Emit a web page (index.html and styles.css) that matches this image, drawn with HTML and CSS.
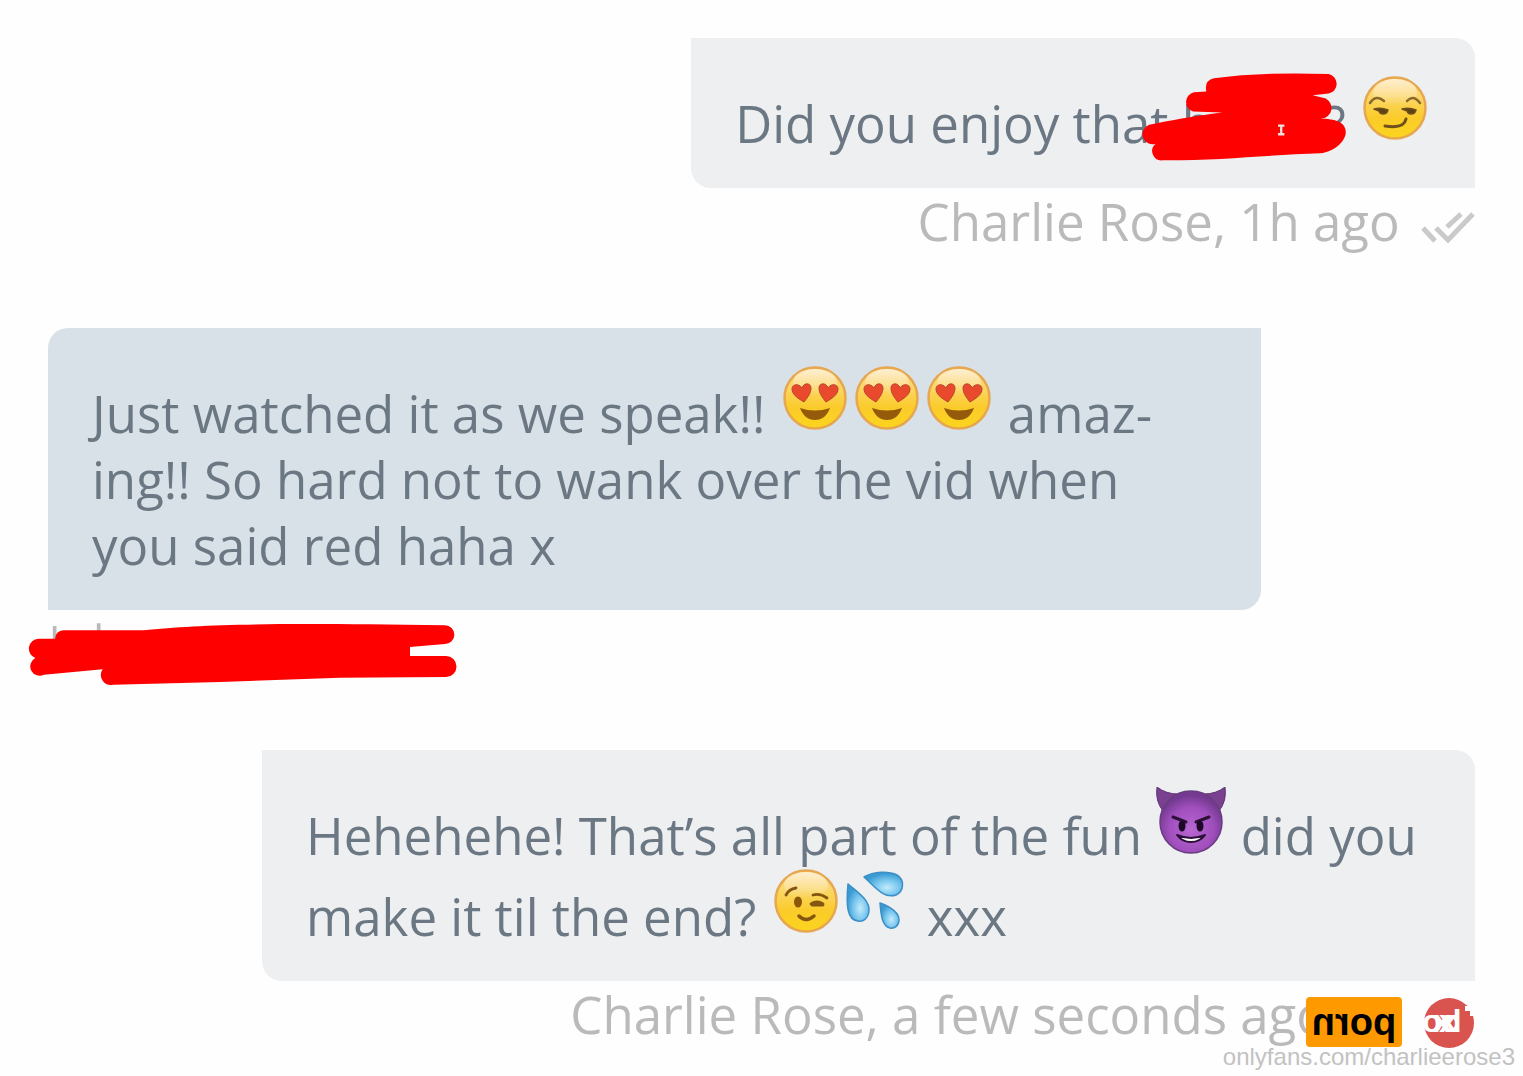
FILE: index.html
```
<!DOCTYPE html>
<html lang="en">
<head>
    <meta charset="UTF-8">
    <meta name="viewport" content="width=device-width, initial-scale=1.0">
    <title>Messages</title>
    <link rel="stylesheet" href="styles.css">
</head>
<body>
    <!-- Shared shapes for the emoji -->
    <svg class="defs" width="0" height="0" aria-hidden="true">
        <defs>
            <linearGradient id="yellow" x1="0" y1="0" x2="0" y2="1">
                <stop offset="0" stop-color="#fbd27c"/>
                <stop offset="0.3" stop-color="#fbd76b"/>
                <stop offset="0.65" stop-color="#fbcb2b"/>
                <stop offset="1" stop-color="#fbd51c"/>
            </linearGradient>
            <linearGradient id="shine" x1="0" y1="0" x2="0" y2="1">
                <stop offset="0" stop-color="#fff4dc" stop-opacity="0.85"/>
                <stop offset="1" stop-color="#fff4dc" stop-opacity="0"/>
            </linearGradient>
            <radialGradient id="purple" cx="0.5" cy="0.62" r="0.55">
                <stop offset="0" stop-color="#b766d2"/>
                <stop offset="0.65" stop-color="#a04fbd"/>
                <stop offset="1" stop-color="#743a91"/>
            </radialGradient>
            <radialGradient id="water" cx="0.6" cy="0.65" r="0.6">
                <stop offset="0" stop-color="#c3ebfb"/>
                <stop offset="0.5" stop-color="#7cc8ef"/>
                <stop offset="1" stop-color="#3a9bd3"/>
            </radialGradient>
            <g id="face">
                <circle cx="35" cy="33" r="30.5" fill="url(#yellow)" stroke="#e6a750" stroke-width="2.5"/>
                <ellipse cx="35" cy="17" rx="22" ry="13" fill="url(#shine)"/>
            </g>
            <symbol id="hearts" viewBox="0 0 70 70">
                <use href="#face"/>
                <path d="M24 37C17 33 12 29 12 24C12 19 19 18 22 23C24 17 31 18 31 23C31 28 28 32 24 37Z" fill="#e9492c" stroke="#b9452a" stroke-width="1"/>
                <path d="M46 37C42 32 39 28 39 23C39 18 46 17 48 23C51 18 58 19 58 24C58 29 53 33 46 37Z" fill="#e9492c" stroke="#b9452a" stroke-width="1"/>
                <path d="M20 43Q35 48 50 43C47 51 42 55 35 55C28 55 23 51 20 43Z" fill="#955b0a"/>
            </symbol>
            <symbol id="smirk" viewBox="0 0 70 70">
                <use href="#face"/>
                <path d="M10 28Q16 19 24 26M47 26Q53 19 60 28" fill="none" stroke="#8b692b" stroke-width="2.5" stroke-linecap="round"/>
                <path d="M14 34Q21 32 28 35Q27 39 23 39Q20 39 19 36ZM42 34Q49 32 56 35Q55 39 51 39Q48 39 47 36Z" fill="#5c4114" stroke="#70501a" stroke-width="1.5" stroke-linejoin="round"/>
                <path d="M25 51Q44 54 46 44" fill="none" stroke="#70501a" stroke-width="3" stroke-linecap="round"/>
            </symbol>
            <symbol id="wink" viewBox="0 0 70 70">
                <use href="#face"/>
                <ellipse cx="27" cy="34" rx="4" ry="5.5" fill="#8a570b"/>
                <g fill="none" stroke="#84560f" stroke-width="2.8" stroke-linecap="round">
                    <path d="M15 27Q18 21 25 20M42 27Q49 25 56 30"/>
                    <path d="M40 36Q46 32 52 36M41 37H52"/>
                    <path d="M28 48Q35 55 43 48" stroke-width="3.5"/>
                </g>
            </symbol>
            <symbol id="devil" viewBox="0 0 70 70">
                <path d="M1 0Q10 7 22 7L7 24Q-1 14 1 0ZM69 0Q60 7 48 7L63 24Q71 14 69 0Z" fill="#79418f" stroke="#5f3575" stroke-width="1"/>
                <circle cx="35" cy="35" r="31" fill="url(#purple)" stroke="#6a3b80" stroke-width="1.5"/>
                <path d="M17 30L30 35M53 30L40 35" stroke="#2c1038" stroke-width="3" stroke-linecap="round"/>
                <ellipse cx="26" cy="39" rx="3.5" ry="5.5" fill="#1d0827"/>
                <ellipse cx="44" cy="39" rx="3.5" ry="5.5" fill="#1d0827"/>
                <path d="M21 48Q35 54 49 48Q44 55 35 55Q26 55 21 48Z" fill="#fff" stroke="#2c1038" stroke-width="2" stroke-linejoin="round"/>
            </symbol>
            <symbol id="drops" viewBox="0 0 70 70">
                <g fill="url(#water)" stroke="#3b8fc6" stroke-width="1.5" stroke-linejoin="round">
                    <path d="M21 9C31 3 46 3 54 7C62 12 61 23 53 27C41 31 33 20 21 9Z"/>
                    <path d="M5 16C14 24 27 32 26 43C25 51 20 54 15 53C4 52 3 37 5 16Z"/>
                    <path d="M37 35C45 38 56 44 56 52C56 58 51 61 47 60C39 58 38 47 37 35Z"/>
                </g>
            </symbol>
            <symbol id="ticks" viewBox="0 0 54 34">
                <path d="M2 17L14 30M15 17L27 29L52 3M26 16L40 3" fill="none" stroke="#cacaca" stroke-width="5"/>
            </symbol>
        </defs>
    </svg>

    <main class="chat">
        <div class="message sent">
            <p class="bubble">Did you enjoy that <span class="hidden-word"><span>b</span><span>?</span><svg class="scribble word-scribble" viewBox="60 30 640 280" aria-hidden="true"><path d="M285 55Q430 35 630 42A30 30 0 0 1 630 101L582 106L610 113A30 30 0 0 1 605 176C650 178 682 185 682 218C680 245 650 275 605 281C450 285 300 303 130 302A28 28 0 0 1 110 252A30 30 0 0 1 90 195C150 182 230 168 310 158L222 155A30 30 0 0 1 225 97L262 95Q255 62 285 55Z" fill="#f00"/><path d="M478 194H497V201H491V220H497V227H478V220H484V201H478Z" fill="#f3dede"/></svg></span> <svg class="emoji" role="img" aria-label="smirk"><use href="#smirk"/></svg></p>
            <div class="meta">Charlie Rose, 1h ago <svg class="ticks" role="img" aria-label="read"><use href="#ticks"/></svg></div>
        </div>

        <div class="message received">
            <p class="bubble">Just watched it as we speak!! <svg class="emoji" role="img" aria-label="heart eyes"><use href="#hearts"/></svg><svg class="emoji" role="img" aria-label="heart eyes"><use href="#hearts"/></svg><svg class="emoji" role="img" aria-label="heart eyes"><use href="#hearts"/></svg> amaz&shy;ing!! So hard not to wank over the vid when you said red haha x</p>
            <div class="meta">
                <svg class="scribble name-scribble" viewBox="0 0 1320 270" aria-hidden="true"><path d="M104 78V120M236 70V100" stroke="#b9b9b9" stroke-width="11"/><path d="M130 91H370C550 72 760 68 1275 76A28 28 0 0 1 1275 132L1170 141V168H1278A30 30 0 0 1 1278 231L960 233L600 246L280 254A30 30 0 0 1 248 208L72 224A28 28 0 0 1 46 174A30 30 0 0 1 55 116H105Q108 92 130 91Z" fill="#f00"/></svg>
            </div>
        </div>

        <div class="message sent">
            <p class="bubble">Hehehehe! That’s all part of the fun <svg class="emoji" role="img" aria-label="devil"><use href="#devil"/></svg> did you make it til the end? <svg class="emoji" role="img" aria-label="wink"><use href="#wink"/></svg><svg class="emoji" role="img" aria-label="sweat drops"><use href="#drops"/></svg> xxx</p>
            <div class="meta meta-last">Charlie Rose, a few seconds ago</div>
        </div>

        <!-- Watermark -->
        <div class="watermark">
            <div class="logos">
                <span class="badge">porn</span>
                <svg class="round-logo" viewBox="0 0 52 52" aria-hidden="true">
                    <circle cx="27" cy="27" r="25" fill="#d9534f"/>
                    <g class="logo-text">
                        <text x="0" y="36">o</text>
                        <text x="11" y="36">x</text>
                        <text x="17" y="36">x</text>
                        <text x="20" y="36">d</text>
                    </g>
                    <path d="M43 10H51V20H48V15H43Z" fill="#fff"/>
                </svg>
            </div>
            <span>onlyfans.com/charlieerose3</span>
        </div>
    </main>
</body>
</html>
```
FILE: styles.css
```
* {
    box-sizing: border-box;
}

body {
    margin: 0;
    background-color: #fefefe;
    font-family: "Open Sans", "Noto Sans", sans-serif;
    font-size: 51px;
    line-height: 66px;
    color: #6b7883;
}

.defs {
    position: absolute;
}

.chat {
    position: relative;
    display: flex;
    flex-direction: column;
    gap: 74px;
    min-height: 100vh;
    padding: 38px 48px 0;
}

.message {
    display: flex;
    flex-direction: column;
}

.sent {
    align-items: flex-end;
}

.received {
    align-items: flex-start;
}

.bubble {
    max-width: 85%;
    margin: 0;
    padding: 37px 44px 32px;
    background-color: #eeeff1;
    border-radius: 0 20px 0 20px;
}

.received .bubble {
    background-color: #d9e1e8;
    border-radius: 20px 0 20px 0;
}

.emoji {
    width: 70px;
    height: 70px;
    margin: 0 1px;
    vertical-align: -2px;
}

.meta {
    position: relative;
    min-height: 66px;
    color: #bababa;
}

.meta-last {
    padding-right: 148px;
}

.ticks {
    width: 54px;
    height: 34px;
    margin-left: 8px;
    vertical-align: -4px;
}

/* Red marker strokes drawn over the text */
.hidden-word {
    position: relative;
    display: inline-flex;
    justify-content: space-between;
    width: 164px;
}

.scribble {
    position: absolute;
}

.word-scribble {
    left: -43px;
    top: -20px;
    width: 213px;
    height: 93px;
}

.name-scribble {
    left: -28px;
    top: -10px;
    width: 440px;
    height: 90px;
}

.watermark {
    position: absolute;
    right: 8px;
    bottom: 10px;
    display: flex;
    flex-direction: column;
    align-items: flex-end;
    font-family: "Liberation Sans", Arial, sans-serif;
    font-size: 24px;
    line-height: 18px;
    color: #c2c2c2;
}

.logos {
    display: flex;
    align-items: center;
    gap: 20px;
    padding-right: 41px;
}

.badge {
    width: 96px;
    height: 50px;
    border-radius: 4px;
    background-color: #f90;
    color: #000;
    font-size: 38px;
    font-weight: bold;
    line-height: 50px;
    text-align: center;
    transform: scaleX(-1);
}

.round-logo {
    width: 52px;
    height: 52px;
}

.logo-text {
    fill: #fff;
    font-size: 32px;
    font-weight: bold;
}
```
